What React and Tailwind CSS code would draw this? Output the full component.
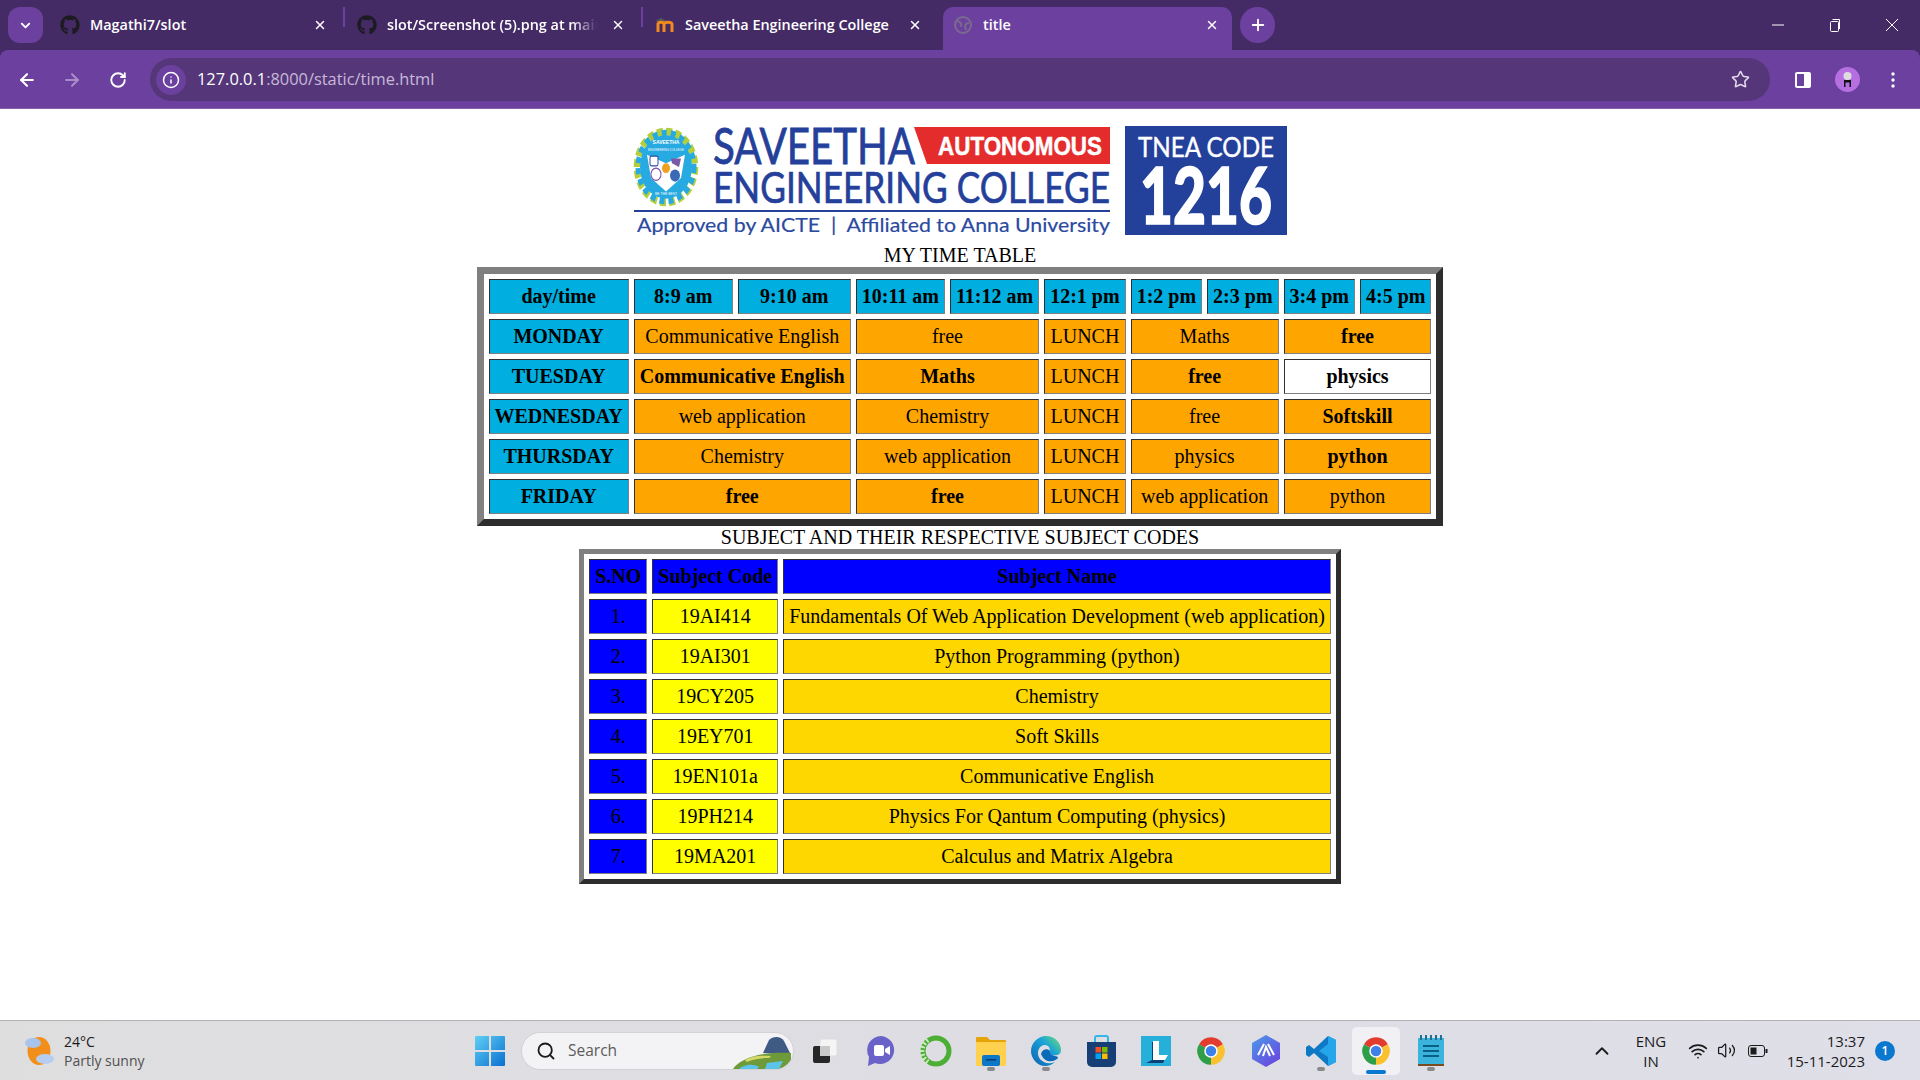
import React from "react";
import { FaGithub } from "react-icons/fa";
import { ArrowLeft, ArrowRight, RotateCw, Info, Star, X, Plus, ChevronDown, ChevronUp, Search, Wifi, Volume2 } from "lucide-react";

const cellBorder = "border border-t-[#303030] border-l-[#303030] border-r-[#808080] border-b-[#808080] p-[5px] text-center";
const skyHead = `${cellBorder} bg-[#00afdf] font-bold`;
const orange = `${cellBorder} bg-[#ffa500]`;

const hours = ["8:9 am", "9:10 am", "10:11 am", "11:12 am", "12:1 pm", "1:2 pm", "2:3 pm", "3:4 pm", "4:5 pm"];

// [label, bold?] for the four subject blocks, LUNCH always sits after the second
const days = [
  ["MONDAY", ["Communicative English", 0], ["free", 0], ["Maths", 0], ["free", 1]],
  ["TUESDAY", ["Communicative English", 1], ["Maths", 1], ["free", 1], ["physics", 1, "white"]],
  ["WEDNESDAY", ["web application", 0], ["Chemistry", 0], ["free", 0], ["Softskill", 1]],
  ["THURSDAY", ["Chemistry", 0], ["web application", 0], ["physics", 0], ["python", 1]],
  ["FRIDAY", ["free", 1], ["free", 1], ["web application", 0], ["python", 0]],
];

const subjects = [
  ["1.", "19AI414", "Fundamentals Of Web Application Development (web application)"],
  ["2.", "19AI301", "Python Programming (python)"],
  ["3.", "19CY205", "Chemistry"],
  ["4.", "19EY701", "Soft Skills"],
  ["5.", "19EN101a", "Communicative English"],
  ["6.", "19PH214", "Physics For Qantum Computing (physics)"],
  ["7.", "19MA201", "Calculus and Matrix Algebra"],
];

const ChromeLogo = ({ size = 30 }) => (
  <svg width={size} height={size} viewBox="0 0 24 24">
    <path d="M2.47 6.5A11 11 0 0 1 21.53 6.5L12 12Z" fill="#e33b2e" />
    <path d="M21.53 6.5A11 11 0 0 1 12 23L12 12Z" fill="#fbc02d" />
    <path d="M12 23A11 11 0 0 1 2.47 6.5L12 12Z" fill="#2f9e48" />
    <circle cx="12" cy="12" r="5.4" fill="#fff" />
    <circle cx="12" cy="12" r="4.2" fill="#3f7fe8" />
  </svg>
);

const Logo = () => (
  <svg width="660" height="135" viewBox="630 109 660 135" className="block">
    <g transform="translate(666 167) scale(1 1.22)">
      <circle r="29" fill="none" stroke="#b5cf3c" strokeWidth="6.5" strokeDasharray="6 3.1" />
      <circle r="28" fill="none" stroke="#27a9e1" strokeWidth="5" strokeDasharray="5 4.1" />
      <circle r="26" fill="#27a9e1" />
      <path d="M-19 -10L0 -3L19 -10L15 9L0 20L-15 9Z" fill="#fff" />
      <rect x="-16" y="-9" width="8" height="8" rx="1.5" fill="#fff" stroke="#2b4aa0" />
      <circle cx="-10" cy="6" r="5" fill="none" stroke="#7a4fa8" />
      <circle cx="9" cy="7" r="5" fill="#3b69b5" />
      <path d="M5 -7L15 -7L13 0L6 -3Z" fill="#7a5aa8" />
      <circle cx="0" cy="1" r="4" fill="#f0a020" />
      <text x="0" y="-19" fontSize="5" fontWeight="700" textAnchor="middle" fill="#fff" fontFamily="'Liberation Sans', sans-serif">SAVEETHA</text>
      <text x="0" y="-13" fontSize="3" textAnchor="middle" fill="#fff" fontFamily="'Liberation Sans', sans-serif">ENGINEERING COLLEGE</text>
      <text x="0" y="23" fontSize="3.4" textAnchor="middle" fill="#fff" fontFamily="'Liberation Sans', sans-serif">BE THE BEST</text>
    </g>
    <text x="713" y="164" fontSize="50" fill="#24409a" stroke="#24409a" strokeWidth="0.8" textLength="202" lengthAdjust="spacingAndGlyphs" fontFamily="Lato, sans-serif">SAVEETHA</text>
    <path d="M914 127H1110V164H927Z" fill="#e42c2c" />
    <text x="938" y="155" fontSize="26.5" fontWeight="700" fill="#fff" stroke="#fff" strokeWidth="0.5" textLength="164" lengthAdjust="spacingAndGlyphs" fontFamily="'Liberation Sans', sans-serif">AUTONOMOUS</text>
    <text x="713" y="203" fontSize="43" fill="#24409a" stroke="#24409a" strokeWidth="0.7" textLength="397" lengthAdjust="spacingAndGlyphs" fontFamily="Lato, sans-serif">ENGINEERING COLLEGE</text>
    <rect x="634" y="210" width="476" height="2" fill="#24409a" />
    <text x="637" y="232" fontSize="20" fill="#2b4aa0" stroke="#2b4aa0" strokeWidth="0.2" textLength="473" lengthAdjust="spacingAndGlyphs" fontFamily="Lato, sans-serif">{"Approved by AICTE\u00a0\u00a0|\u00a0\u00a0Affiliated to Anna University"}</text>
    <rect x="1125" y="126" width="162" height="109" fill="#23409a" />
    <text x="1138" y="157" fontSize="26" fill="#fff" stroke="#fff" strokeWidth="0.4" textLength="136" lengthAdjust="spacingAndGlyphs" fontFamily="Lato, sans-serif">TNEA CODE</text>
    <text x="1140" y="224" fontSize="79" fontWeight="900" fill="#fff" stroke="#fff" strokeWidth="1.6" textLength="132" lengthAdjust="spacingAndGlyphs" fontFamily="Lato, sans-serif">1216</text>
  </svg>
);

const Tab = ({ icon, title, active, fade, className, closeClass }) => (
  <div className={`flex h-[43px] items-center pb-[7px] ${active ? "rounded-t-[10px] bg-[#6c409e]" : ""} ${className}`}>
    <div className="flex w-[22px] shrink-0 justify-center">{icon}</div>
    <div className={`ml-[9px] min-w-0 flex-1 overflow-hidden whitespace-nowrap text-[14.4px] font-semibold text-white ${fade ? "[mask-image:linear-gradient(to_right,black_88%,transparent)]" : ""}`}>{title}</div>
    <X size={14} strokeWidth={2.5} className={`shrink-0 text-white ${closeClass}`} />
  </div>
);

const TabSep = () => <div className="mb-[7px] h-[20px] w-[2px] shrink-0 bg-[#6c409e]" />;

const BrowserChrome = () => (
  <div className="shrink-0 bg-[#452b66] font-['Open_Sans',sans-serif]">
    <div className="flex h-[50px] items-start pt-[7px]">
      <div className="ml-[8px] flex h-[36px] w-[35px] shrink-0 items-center justify-center rounded-[12px] bg-[#6c409e]">
        <ChevronDown size={15} strokeWidth={3} className="text-white" />
      </div>
      <Tab className="ml-[6px] w-[294px] pl-[10px]" closeClass="ml-[14px] mr-[16px]" icon={<FaGithub size={20} className="text-[#1c1b22]" />} title="Magathi7/slot" />
      <TabSep />
      <Tab fade className="w-[296px] pl-[11px]" closeClass="ml-[14px] mr-[16px]" icon={<FaGithub size={20} className="text-[#1c1b22]" />} title="slot/Screenshot (5).png at main" />
      <TabSep />
      <Tab
        className="w-[295px] pl-[11px]"
        closeClass="ml-[14px] mr-[16px]"
        icon={
          <svg width="20" height="20" viewBox="0 0 20 20">
            <path d="M0 6L6 3L12 6L6 8Z" fill="#555" />
            <path d="M3 17V9C3 6.5 9 6.5 9 9.5V17M9 17V9.5C9 6.5 17 6.5 17 9.5V17" fill="none" stroke="#f28a1e" strokeWidth="3" />
          </svg>
        }
        title="Saveetha Engineering College"
      />
      <Tab
        active
        className="ml-[5px] w-[289px] pl-[9px]"
        closeClass="ml-[14px] mr-[13px]"
        icon={
          <svg width="20" height="20" viewBox="0 0 20 20" fill="none" stroke="#7b6a8e" strokeWidth="2">
            <circle cx="10" cy="10" r="8" />
            <path d="M4 6c4 1 5 3 4 6M16 8c-3 0-5 2-3 7" />
          </svg>
        }
        title="title"
      />
      <div className="ml-[8px] flex h-[36px] w-[35px] shrink-0 items-center justify-center rounded-full bg-[#6c409e]">
        <Plus size={18} strokeWidth={2.5} className="text-white" />
      </div>
      <div className="ml-auto flex h-[36px] items-center text-white">
        <svg width="14" height="14" viewBox="0 0 14 14" className="mr-[43px]"><path d="M1 7H13" stroke="#fff" /></svg>
        <svg width="14" height="14" viewBox="0 0 14 14" fill="none" stroke="#fff" className="mr-[43px]">
          <rect x="2.5" y="3.5" width="8" height="10" rx="1" />
          <path d="M4.5 1.5H11.5V11" />
        </svg>
        <svg width="14" height="14" viewBox="0 0 14 14" className="mr-[21px]"><path d="M1 1L13 13M13 1L1 13" stroke="#fff" /></svg>
      </div>
    </div>
    <div className="flex h-[59px] items-start rounded-t-[8px] border-b border-[#8560ad] bg-[#6c409e] pt-[8px]">
      <div className="flex h-[43px] w-[150px] shrink-0 items-center text-white">
        <ArrowLeft size={20} strokeWidth={2.5} className="ml-[17px]" />
        <ArrowRight size={20} strokeWidth={2.5} className="ml-[25px] text-[#a98dc8]" />
        <RotateCw size={18} strokeWidth={2.5} className="ml-[27px]" />
      </div>
      <div className="flex h-[43px] w-[1620px] shrink-0 items-center rounded-full bg-[#553779] pl-[6px]">
        <div className="flex h-[30px] w-[30px] items-center justify-center rounded-full bg-[#6c409e]">
          <Info size={18} strokeWidth={2} className="text-white" />
        </div>
        <div className="ml-[11px] whitespace-nowrap text-[16.4px] text-white">
          127.0.0.1<span className="text-[#c8b8da]">:8000/static/time.html</span>
        </div>
        <Star size={19} strokeWidth={2} className="ml-auto mr-[20px] text-[#e2d9ec]" />
      </div>
      <div className="flex h-[43px] flex-1 items-center">
        <svg width="18" height="18" viewBox="0 0 18 18" className="ml-[24px]">
          <rect x="1" y="1" width="16" height="16" rx="2" fill="#fff" />
          <rect x="3" y="3" width="7" height="12" fill="#6c409e" />
        </svg>
        <svg width="25" height="25" viewBox="0 0 25 25" className="ml-[23px]">
          <circle cx="12.5" cy="12.5" r="12.5" fill="#b56fe0" />
          <circle cx="12.5" cy="9" r="4" fill="#ddd" />
          <path d="M9 13H16V20H14.5V15.5H10.5V20H9Z" fill="#111" />
        </svg>
        <svg width="4" height="16" viewBox="0 0 4 16" className="ml-[31px]" fill="#fff">
          <circle cx="2" cy="2" r="1.7" />
          <circle cx="2" cy="8" r="1.7" />
          <circle cx="2" cy="14" r="1.7" />
        </svg>
      </div>
    </div>
  </div>
);

const Slot = ({ data }) => {
  const [label, bold, bg] = data;
  return (
    <td colSpan={2} className={`${cellBorder} ${bg === "white" ? "bg-white" : "bg-[#ffa500]"} ${bold ? "font-bold" : "font-normal"}`}>
      {label}
    </td>
  );
};

const TimeTable = () => (
  <table className="border-separate border-spacing-[5px] border-[7px] border-t-[#808080] border-l-[#808080] border-r-[#2d2d2d] border-b-[#2d2d2d]">
    <tbody>
      <tr>
        <th className={skyHead}>day/time</th>
        {hours.map((h) => (
          <th key={h} className={skyHead}>{h}</th>
        ))}
      </tr>
      {days.map(([day, a, b, c, d]) => (
        <tr key={day}>
          <th className={skyHead}>{day}</th>
          <Slot data={a} />
          <Slot data={b} />
          <td className={orange}>LUNCH</td>
          <Slot data={c} />
          <Slot data={d} />
        </tr>
      ))}
    </tbody>
  </table>
);

const SubjectTable = () => (
  <table className="border-separate border-spacing-[5px] border-[5px] border-t-[#808080] border-l-[#808080] border-r-[#2d2d2d] border-b-[#2d2d2d]">
    <tbody>
      <tr>
        <th className={`${cellBorder} bg-[#0000ff] font-bold`}>S.NO</th>
        <th className={`${cellBorder} bg-[#0000ff] font-bold`}>Subject Code</th>
        <th className={`${cellBorder} bg-[#0000ff] font-bold`}>Subject Name</th>
      </tr>
      {subjects.map(([no, code, name]) => (
        <tr key={no}>
          <td className={`${cellBorder} bg-[#0000ff]`}>{no}</td>
          <td className={`${cellBorder} bg-[#ffff00]`}>{code}</td>
          <td className={`${cellBorder} bg-[#ffd700]`}>{name}</td>
        </tr>
      ))}
    </tbody>
  </table>
);

const Dot = () => <div className="absolute bottom-[4px] left-1/2 h-[4px] w-[8px] -translate-x-1/2 rounded-full bg-[#8a8a8a]" />;

const AppSlot = ({ children, dot, active }) => (
  <div className={`relative flex h-[48px] w-[48px] items-center justify-center rounded-[5px] ${active ? "bg-[#f1f0f4]" : ""}`}>
    {children}
    {dot && <Dot />}
    {active && <div className="absolute bottom-[1px] left-1/2 h-[4px] w-[20px] -translate-x-1/2 rounded-full bg-[#0b78d0]" />}
  </div>
);

const Taskbar = () => (
  <div className="flex h-[60px] shrink-0 items-center border-t border-[#b3b2b6] bg-gradient-to-r from-[#dfdedf] via-[#dedde3] to-[#dfdfe9] font-['Open_Sans',sans-serif]">
    <div className="flex w-[475px] shrink-0 items-center">
      <svg width="34" height="32" viewBox="0 0 34 32" className="ml-[24px] shrink-0">
        <ellipse cx="15" cy="16" rx="11.5" ry="14" fill="#f28f1a" />
        <ellipse cx="9" cy="8" rx="8" ry="5" fill="#a9c4ea" />
        <ellipse cx="21" cy="24" rx="9" ry="5" fill="#b6cdef" />
      </svg>
      <div className="ml-[6px] text-[14px] leading-[19px]">
        <div className="text-[#1b1b1b]">24°C</div>
        <div className="text-[#505050]">Partly sunny</div>
      </div>
    </div>
    <svg width="30" height="30" viewBox="0 0 30 30" className="shrink-0">
      <defs>
        <linearGradient id="win" x1="0" y1="0" x2="1" y2="1">
          <stop offset="0" stopColor="#5fd0f5" />
          <stop offset="1" stopColor="#0a6fd0" />
        </linearGradient>
      </defs>
      <path d="M0 1a1 1 0 0 1 1-1H14V14H0ZM16 0H29a1 1 0 0 1 1 1V14H16ZM0 16H14V30H1a1 1 0 0 1-1-1ZM16 16H30V29a1 1 0 0 1-1 1H16Z" fill="url(#win)" />
    </svg>
    <div className="ml-[16px] flex h-[38px] w-[273px] shrink-0 items-center overflow-hidden rounded-full border border-[#d2d1d5] bg-[#f3f3f5]">
      <Search size={20} strokeWidth={2.2} className="ml-[14px] text-[#1b1b1b]" />
      <span className="ml-[12px] text-[15.5px] text-[#5c5c5c]">Search</span>
      <svg width="62" height="36" viewBox="0 0 62 36" className="ml-auto">
        <path d="M32 20L38 7C42 3 50 3 53 8L60 22Z" fill="#3f5a85" />
        <path d="M2 36C8 26 30 18 60 20L60 30L50 36Z" fill="#6f9a3a" />
        <path d="M8 36C12 32 22 30 28 34L26 36Z" fill="#5cc4ea" />
        <path d="M36 30L52 28L48 36H34Z" fill="#5cc4ea" />
        <path d="M14 27C20 23 30 22 40 23L38 25C30 25 22 26 16 29Z" fill="#d6d86a" />
      </svg>
    </div>
    <div className="ml-[13px] flex w-[35px] shrink-0 justify-center">
      <svg width="26" height="26" viewBox="0 0 26 26">
        <rect x="8" y="1" width="17" height="17" rx="2" fill="#f5f5f5" stroke="#ddd" />
        <rect x="1" y="8" width="17" height="17" rx="2" fill="#262626" />
        <rect x="8" y="8" width="10" height="10" fill="#c9c9c9" />
      </svg>
    </div>
    <div className="ml-[15px] flex shrink-0 gap-[7px]">
      <AppSlot>
        <svg width="30" height="32" viewBox="0 0 30 32">
          <path d="M15 1A14 14 0 1 1 9 28L2 31L3 22A14 14 0 0 1 15 1Z" fill="#6b62c9" />
          <rect x="8" y="10" width="10" height="11" rx="2" fill="#fff" />
          <path d="M19 14L24 11V20L19 17Z" fill="#fff" />
        </svg>
      </AppSlot>
      <AppSlot>
        <svg width="32" height="32" viewBox="0 0 32 32">
          <circle cx="16" cy="16" r="13" fill="none" stroke="#4caf35" strokeWidth="5" />
          <path d="M8 5A13 13 0 0 0 8 27" fill="none" stroke="#cfe8c4" strokeWidth="5" strokeDasharray="2 2" />
        </svg>
      </AppSlot>
      <AppSlot dot>
        <svg width="30" height="30" viewBox="0 0 30 30">
          <path d="M0 2a1 1 0 0 1 1-1H11L14 4H29a1 1 0 0 1 1 1V9H0Z" fill="#e5a50a" />
          <rect y="6" width="30" height="24" rx="1" fill="#ffd14f" />
          <rect x="6" y="19" width="18" height="11" rx="2" fill="#0b78c8" />
          <rect x="10" y="23" width="10" height="1.5" fill="#07386b" />
        </svg>
      </AppSlot>
      <AppSlot dot>
        <svg width="30" height="32" viewBox="0 0 30 32">
          <defs>
            <linearGradient id="edge" x1="0" y1="1" x2="1" y2="0">
              <stop offset="0" stopColor="#0d5fb0" />
              <stop offset="0.6" stopColor="#1aa3d8" />
              <stop offset="1" stopColor="#6fe070" />
            </linearGradient>
          </defs>
          <path d="M15 1C24 1 30 8 30 15C30 20 25 21 21 20C17 19 20 15 18 12C15 8 8 10 7 17C6 24 14 31 24 27C20 31 14 32 9 30C3 27 0 21 0 16C0 8 7 1 15 1Z" fill="url(#edge)" />
          <path d="M10 19C12 12 20 14 19 18C21 22 27 20 27 23C24 27 14 29 10 19Z" fill="#0a6ab8" />
        </svg>
      </AppSlot>
      <AppSlot>
        <svg width="29" height="32" viewBox="0 0 29 32">
          <path d="M8 7V3a2 2 0 0 1 2-2H19a2 2 0 0 1 2 2V7" fill="none" stroke="#35b6e8" strokeWidth="2" />
          <path d="M0 7H29V27a5 5 0 0 1-5 5H5a5 5 0 0 1-5-5Z" fill="#173e75" />
          <rect x="8.5" y="12" width="5.5" height="5.5" fill="#f25022" />
          <rect x="15" y="12" width="5.5" height="5.5" fill="#7fba00" />
          <rect x="8.5" y="18.5" width="5.5" height="5.5" fill="#00a4ef" />
          <rect x="15" y="18.5" width="5.5" height="5.5" fill="#ffb900" />
        </svg>
      </AppSlot>
      <AppSlot>
        <svg width="30" height="30" viewBox="0 0 30 30">
          <rect width="30" height="30" fill="#25afd9" />
          <path d="M5 27L11 24V6H16V21H25L22 27Z" fill="#0d3f78" />
          <path d="M12 5H18V19H27L24 24H12Z" fill="#fff" />
        </svg>
      </AppSlot>
      <AppSlot>
        <ChromeLogo />
      </AppSlot>
      <AppSlot>
        <svg width="28" height="32" viewBox="0 0 28 32">
          <defs>
            <linearGradient id="arc" x1="0" y1="0" x2="0.8" y2="1">
              <stop offset="0" stopColor="#4a9be8" />
              <stop offset="1" stopColor="#6a45e0" />
            </linearGradient>
          </defs>
          <path d="M14 0L28 8V24L14 32L0 24V8Z" fill="url(#arc)" />
          <path d="M6 20L12 9M11 21L14 12L18 21M22 20L16 9" fill="none" stroke="#fff" strokeWidth="2" />
        </svg>
      </AppSlot>
      <AppSlot dot>
        <svg width="30" height="32" viewBox="0 0 30 32">
          <path d="M22 1L30 5V27L22 31L8 18L3 22L0 20V12L3 10L8 14Z" fill="#0f78c4" />
          <path d="M22 1L30 5V27L22 31V22L13 16L22 9Z" fill="#25a6ea" />
        </svg>
      </AppSlot>
      <AppSlot active>
        <ChromeLogo />
      </AppSlot>
      <AppSlot dot>
        <svg width="26" height="32" viewBox="0 0 26 32">
          <rect y="3" width="26" height="27" fill="#3ab4dc" />
          <rect y="29" width="26" height="2" fill="#7a4a20" />
          <path d="M3 0V5M8 0V5M13 0V5M18 0V5M23 0V5" stroke="#1f6f8f" strokeWidth="2" />
          <path d="M5 11H21M5 16H21M5 21H21" stroke="#0a5f86" strokeWidth="2" />
        </svg>
      </AppSlot>
    </div>
    <ChevronUp size={22} strokeWidth={2} className="ml-[136px] shrink-0 text-[#1b1b1b]" />
    <div className="ml-[14px] w-[48px] shrink-0 text-center text-[15px] leading-[20px] text-[#1b1b1b]">
      <div>ENG</div>
      <div>IN</div>
    </div>
    <Wifi size={20} strokeWidth={2} className="ml-[13px] shrink-0 text-[#1b1b1b]" />
    <Volume2 size={19} strokeWidth={1.6} className="ml-[9px] shrink-0 text-[#1b1b1b]" />
    <svg width="20" height="14" viewBox="0 0 20 14" className="ml-[12px] shrink-0">
      <rect x="0.5" y="1.5" width="16" height="11" rx="2.5" fill="none" stroke="#1b1b1b" />
      <rect x="2.5" y="3.5" width="6" height="7" fill="#1b1b1b" />
      <rect x="17.5" y="5" width="2" height="4" fill="#1b1b1b" />
    </svg>
    <div className="ml-auto text-right text-[15px] leading-[20px] text-[#1b1b1b]">
      <div>13:37</div>
      <div>15-11-2023</div>
    </div>
    <div className="ml-[10px] mr-[25px] flex h-[20px] w-[20px] shrink-0 items-center justify-center rounded-full bg-[#0b78d0] text-[12px] font-semibold text-white">1</div>
  </div>
);

export default function App() {
  return (
    <div className="flex h-[1080px] flex-col overflow-hidden bg-white">
      <BrowserChrome />
      <main className="flex flex-1 flex-col items-center font-['Liberation_Serif',serif] text-[20px] leading-[23px] text-black">
        <Logo />
        <div>MY TIME TABLE</div>
        <TimeTable />
        <div>SUBJECT AND THEIR RESPECTIVE SUBJECT CODES</div>
        <SubjectTable />
      </main>
      <Taskbar />
    </div>
  );
}
